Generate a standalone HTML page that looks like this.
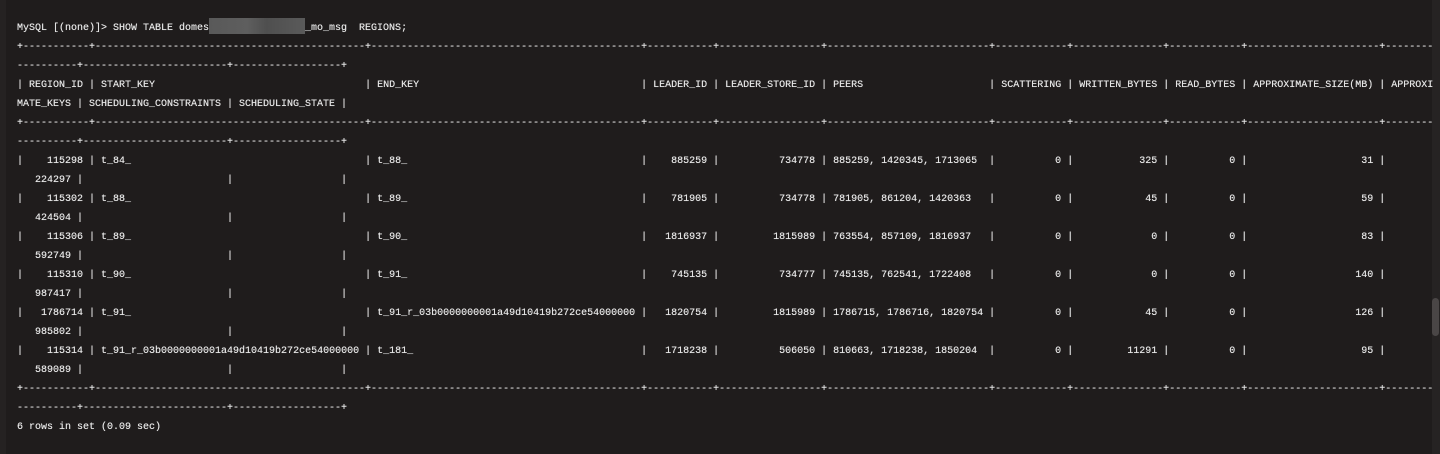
<!DOCTYPE html>
<html><head><meta charset="utf-8"><style>
html,body{margin:0;padding:0;width:1440px;height:454px;overflow:hidden;background:#1f1c1c;}
.edge{position:absolute;left:0;top:0;width:6px;height:454px;background:#252222;}
.track{position:absolute;right:0;top:0;width:8px;height:454px;background:#262323;}
.thumb{position:absolute;right:1px;top:298px;width:7px;height:38px;border-radius:4px;background:#4a4646;}
pre{position:absolute;left:17px;top:18px;margin:0;font-family:"Liberation Mono",monospace;font-size:10px;line-height:19px;color:#e6e6e6;white-space:pre;text-shadow:0 0 0.4px #e6e6e6;}
i{font-style:normal;display:inline-block;}
.r{text-align:right}
.w7{width:7ch}.w9{width:9ch}.w10{width:10ch}.w13{width:13ch}.w15{width:15ch}.w16{width:16ch}.w20{width:20ch}.w22{width:22ch}.w25{width:25ch}.w43{width:43ch}
.red{display:inline-block;width:16ch;height:16px;vertical-align:-4px;background:linear-gradient(90deg,#595959 0,#5e5e5e 40%,#4f4f4f 60%,#5a5a5a 100%);}
</style></head><body>
<div class="edge"></div><div class="track"></div><div class="thumb"></div>
<pre>MySQL [(none)]&gt; SHOW TABLE domes<span class="red"></span>_mo_msg  REGIONS;
+-----------+---------------------------------------------+---------------------------------------------+-----------+-----------------+---------------------------+------------+---------------+------------+----------------------+--------
----------+------------------------+------------------+
| <i class="w9">REGION_ID</i> | <i class="w43">START_KEY</i> | <i class="w43">END_KEY</i> | <i class="w9">LEADER_ID</i> | <i class="w15">LEADER_STORE_ID</i> | <i class="w25">PEERS</i> | <i class="w10">SCATTERING</i> | <i class="w13">WRITTEN_BYTES</i> | <i class="w10">READ_BYTES</i> | <i class="w20">APPROXIMATE_SIZE(MB)</i> | APPROXI
MATE_KEYS | SCHEDULING_CONSTRAINTS | SCHEDULING_STATE |
+-----------+---------------------------------------------+---------------------------------------------+-----------+-----------------+---------------------------+------------+---------------+------------+----------------------+--------
----------+------------------------+------------------+
| <i class="w9 r">115298</i> | <i class="w43">t_84_</i> | <i class="w43">t_88_</i> | <i class="w9 r">885259</i> | <i class="w15 r">734778</i> | <i class="w25">885259, 1420345, 1713065</i> | <i class="w10 r">0</i> | <i class="w13 r">325</i> | <i class="w10 r">0</i> | <i class="w20 r">31</i> | 
<i class="w9 r">224297</i> | <i class="w22"></i> | <i class="w16"></i> |
| <i class="w9 r">115302</i> | <i class="w43">t_88_</i> | <i class="w43">t_89_</i> | <i class="w9 r">781905</i> | <i class="w15 r">734778</i> | <i class="w25">781905, 861204, 1420363</i> | <i class="w10 r">0</i> | <i class="w13 r">45</i> | <i class="w10 r">0</i> | <i class="w20 r">59</i> | 
<i class="w9 r">424504</i> | <i class="w22"></i> | <i class="w16"></i> |
| <i class="w9 r">115306</i> | <i class="w43">t_89_</i> | <i class="w43">t_90_</i> | <i class="w9 r">1816937</i> | <i class="w15 r">1815989</i> | <i class="w25">763554, 857109, 1816937</i> | <i class="w10 r">0</i> | <i class="w13 r">0</i> | <i class="w10 r">0</i> | <i class="w20 r">83</i> | 
<i class="w9 r">592749</i> | <i class="w22"></i> | <i class="w16"></i> |
| <i class="w9 r">115310</i> | <i class="w43">t_90_</i> | <i class="w43">t_91_</i> | <i class="w9 r">745135</i> | <i class="w15 r">734777</i> | <i class="w25">745135, 762541, 1722408</i> | <i class="w10 r">0</i> | <i class="w13 r">0</i> | <i class="w10 r">0</i> | <i class="w20 r">140</i> | 
<i class="w9 r">987417</i> | <i class="w22"></i> | <i class="w16"></i> |
| <i class="w9 r">1786714</i> | <i class="w43">t_91_</i> | <i class="w43">t_91_r_03b0000000001a49d10419b272ce54000000</i> | <i class="w9 r">1820754</i> | <i class="w15 r">1815989</i> | <i class="w25">1786715, 1786716, 1820754</i> | <i class="w10 r">0</i> | <i class="w13 r">45</i> | <i class="w10 r">0</i> | <i class="w20 r">126</i> | 
<i class="w9 r">985802</i> | <i class="w22"></i> | <i class="w16"></i> |
| <i class="w9 r">115314</i> | <i class="w43">t_91_r_03b0000000001a49d10419b272ce54000000</i> | <i class="w43">t_181_</i> | <i class="w9 r">1718238</i> | <i class="w15 r">506050</i> | <i class="w25">810663, 1718238, 1850204</i> | <i class="w10 r">0</i> | <i class="w13 r">11291</i> | <i class="w10 r">0</i> | <i class="w20 r">95</i> | 
<i class="w9 r">589089</i> | <i class="w22"></i> | <i class="w16"></i> |
+-----------+---------------------------------------------+---------------------------------------------+-----------+-----------------+---------------------------+------------+---------------+------------+----------------------+--------
----------+------------------------+------------------+
6 rows in set (0.09 sec)</pre>
</body></html>
